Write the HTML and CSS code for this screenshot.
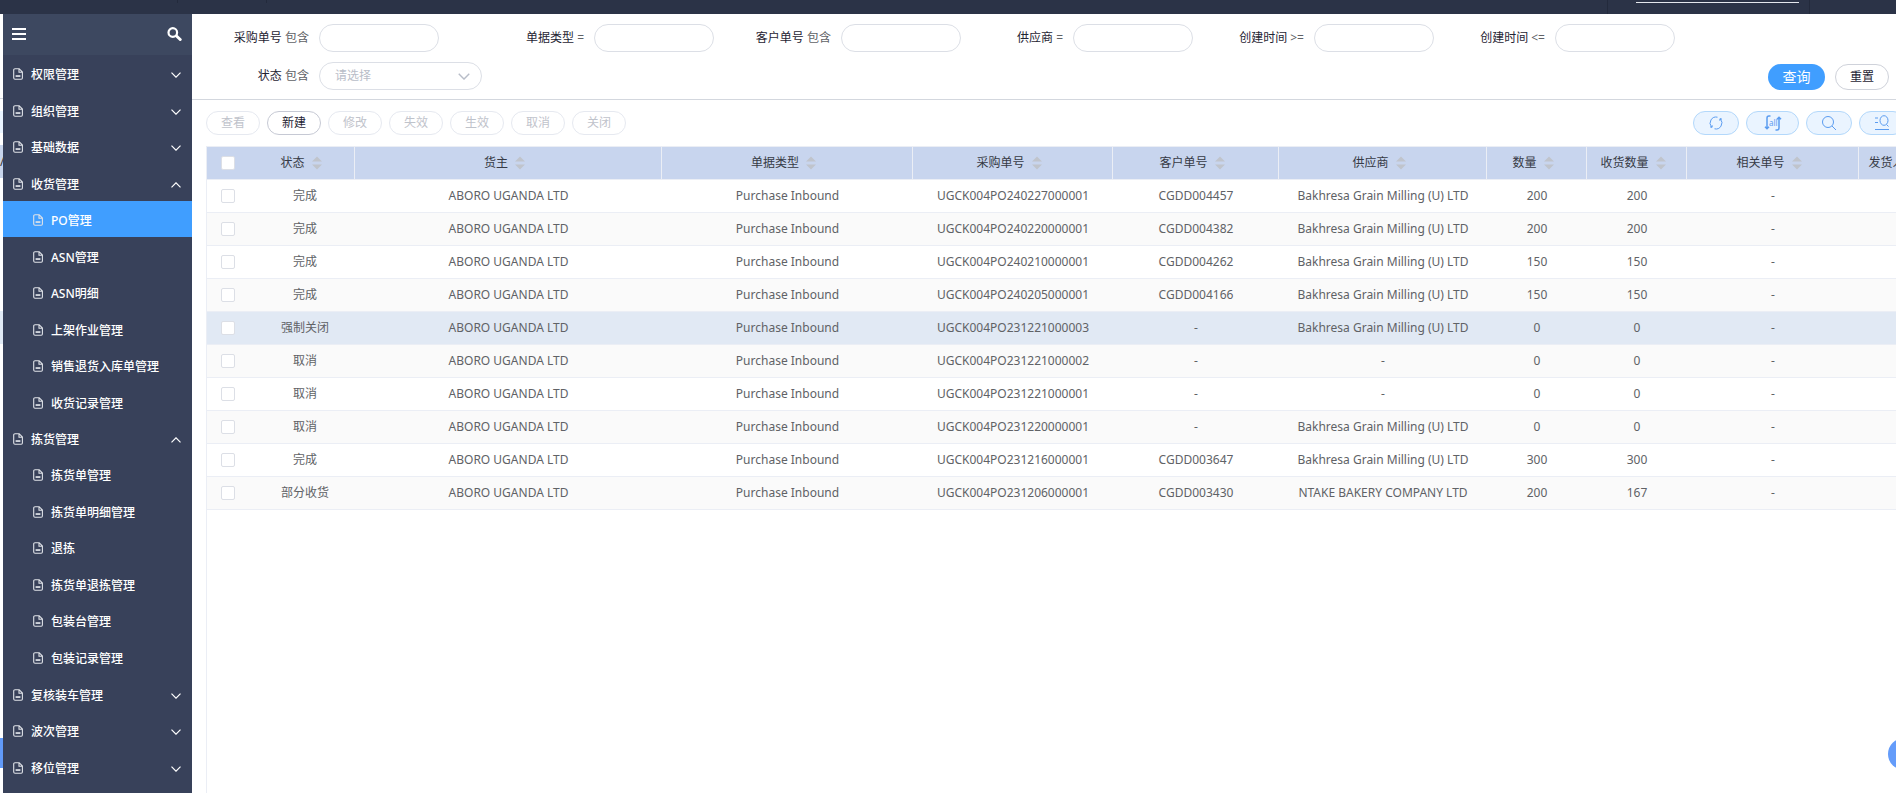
FILE: index.html
```html
<!DOCTYPE html>
<html lang="zh-CN">
<head>
<meta charset="utf-8">
<title>PO管理</title>
<link rel="stylesheet" href="styles.css">
</head>
<body>
<svg class="sprite" aria-hidden="true">
  <symbol id="doc" viewBox="0 0 10 12"><path d="M2 .7h4.200L9.400 4v6a1.200 1.200 0 0 1-1.200 1.200H2A1.300 1.300 0 0 1 .7 10V2A1.300 1.300 0 0 1 2 .7zM6 .9v3.400h3.200" fill="none" stroke="currentColor" stroke-width="1.100"/><path d="M2.600 7.200h4.800v1.700H2.600z" fill="currentColor"/></symbol>
  <symbol id="down" viewBox="0 0 10 6"><path d="M.5.7 5 5.200 9.500.7" fill="none" stroke="currentColor" stroke-width="1.200"/></symbol>
  <symbol id="up" viewBox="0 0 10 6"><path d="M.5 5.300 5 .8l4.500 4.500" fill="none" stroke="currentColor" stroke-width="1.200"/></symbol>
</svg>
<header class="topbar"><span class="tab"></span><span class="tab tab-side"></span><span class="tab tab-search"></span></header>
<div class="layout">
  <div class="edge" aria-hidden="true"><span class="edge-mark">/</span></div>
  <aside class="sidebar">
    <div class="side-head">
      <button class="icon-btn" type="button" aria-label="菜单"><svg width="14" height="12" viewBox="0 0 14 12"><path d="M0 1h14M0 6h14M0 11h14" stroke="#fff" stroke-width="2"/></svg></button>
      <button class="icon-btn" type="button" aria-label="搜索"><svg width="15" height="14" viewBox="0 0 15 14"><circle cx="5.800" cy="5.500" r="4.300" fill="none" stroke="#fff" stroke-width="2.200"/><path d="m9.500 9 3.700 3.500" stroke="#fff" stroke-width="3" stroke-linecap="round"/></svg></button>
    </div>
    <nav><ul class="menu" id="menu"></ul></nav>
  </aside>
  <main class="main">
    <form class="filters">
      <div class="field"><label for="f1"><b>采购单号</b> 包含</label><input id="f1" type="text"></div>
      <div class="field"><label for="f2"><b>单据类型</b> =</label><input id="f2" type="text"></div>
      <div class="field"><label for="f3"><b>客户单号</b> 包含</label><input id="f3" type="text"></div>
      <div class="field"><label for="f4"><b>供应商</b> =</label><input id="f4" type="text"></div>
      <div class="field"><label for="f5"><b>创建时间</b> &gt;=</label><input id="f5" type="text"></div>
      <div class="field"><label for="f6"><b>创建时间</b> &lt;=</label><input id="f6" type="text"></div>
      <div class="field field-select"><label for="f7"><b>状态</b> 包含</label><span class="select"><select id="f7"><option>请选择</option></select><svg class="select-arrow" width="12" height="7"><use href="#down"/></svg></span></div>
      <div class="actions"><button class="btn btn-primary" type="button">查询</button><button class="btn btn-plain" type="button">重置</button></div>
    </form>
    <section class="workspace">
      <div class="toolbar">
        <button class="btn" type="button" disabled>查看</button>
        <button class="btn btn-active" type="button">新建</button>
        <button class="btn" type="button" disabled>修改</button>
        <button class="btn" type="button" disabled>失效</button>
        <button class="btn" type="button" disabled>生效</button>
        <button class="btn" type="button" disabled>取消</button>
        <button class="btn" type="button" disabled>关闭</button>
        <span class="tools">
          <button class="tool" type="button" aria-label="刷新"><svg width="14" height="14" viewBox="0 0 14 14"><path d="M8.500 1.200A6 6 0 0 0 2.600 11M1 10.800l2 .6.300-2M5.500 12.800A6 6 0 0 0 11.400 3M13 3.200l-2-.6-.3 2"/></svg></button>
          <button class="tool tool-wide" type="button" aria-label="刷新全部"><svg width="18" height="16" viewBox="0 0 18 16"><path class="thick" d="M6.500 1H5Q3 1 3 3v10.500M1 11.800l2 2 2-2M11.500 15H13q2 0 2-2V2.500M13 4.200l2-2 2 2"/><text x="5" y="11">all</text></svg></button>
          <button class="tool" type="button" aria-label="查找"><svg width="16" height="16" viewBox="0 0 16 16"><circle cx="7" cy="7" r="5.500"/><path d="m11 11 4 4"/></svg></button>
          <button class="tool" type="button" aria-label="高级查询"><svg width="16" height="16" viewBox="0 0 16 16"><path d="M1 3h3M1 7.500h3M1 14.500h14M12.500 9.500l2 2"/><ellipse cx="10" cy="5.500" rx="4" ry="4.800"/></svg></button>
        </span>
      </div>
      <div class="table-box">
        <table>
          <colgroup><col class="c-check"><col class="c-100"><col><col class="c-type"><col class="c-po"><col class="c-cust"><col class="c-supp"><col class="c-100"><col class="c-100"><col class="c-rel"><col class="c-last"></colgroup>
          <thead><tr id="head"></tr></thead>
          <tbody id="rows"></tbody>
        </table>
      </div>
    </section>
  </main>
</div>
<button class="bubble" type="button" aria-label="客服"></button>
<script src="app.js"></script>
</body>
</html>
```
FILE: styles.css
```css
* { box-sizing: border-box; }
body {
  margin: 0;
  height: 100vh;
  display: flex;
  flex-direction: column;
  overflow: hidden;
  background: #fff;
  color: #606266;
  font: 12px/16px "Noto Sans", "Noto Sans CJK SC", sans-serif;
}
button, input, select { font: inherit; }
button { padding: 0; cursor: pointer; }
.sprite { position: absolute; width: 0; height: 0; }

.topbar { height: 14px; flex: none; display: flex; background: #2b3347; padding-right: 86px; }
.tab { width: 178px; height: 3px; border-right: 1px solid #232a3c; }
.tab-side { width: 89px; }
.tab-search { width: 203px; height: 14px; margin-left: auto; border: 1px solid #232a3c; border-width: 0 1px; padding: 2px 10px 0 28px; }
.tab-search::before { content: ""; display: block; height: 1px; background: #e4e7ed; }

.layout { flex: 1; min-height: 0; display: flex; }
.edge {
  flex: none;
  width: 3px;
  overflow: hidden;
  padding-top: 140px;
  background:
    linear-gradient(#d3d7de, #d3d7de) 0 84px / 3px 1px no-repeat,
    linear-gradient(#eaf4ff, #eaf4ff) 0 97px / 3px 22px no-repeat,
    linear-gradient(#c8d5ec, #c8d5ec) 0 131px / 3px 33px no-repeat,
    linear-gradient(#e1eaf5, #e1eaf5) 0 297px / 3px 33px no-repeat,
    linear-gradient(#619af9, #619af9) 0 724px / 3px 30px no-repeat,
    #fff;
}
.edge-mark { color: #333; }

.sidebar { flex: none; width: 189px; background: #38415a; color: #fff; overflow: hidden; }
.side-head { height: 41px; padding: 0 10px 2px 9px; display: flex; justify-content: space-between; align-items: center; background: #3d4860; }
.icon-btn { display: flex; border: 0; background: none; }
.menu, .submenu { list-style: none; margin: 0; padding: 0; }
.menu li:nth-child(odd) { margin-bottom: 1px; }
.menu a { display: flex; align-items: center; height: 36px; padding: 3px 11px 0 10px; color: #fff; text-decoration: none; font-weight: 500; }
.menu .doc { width: 10px; height: 12px; margin: 0 8px 2px 0; color: #dfe2e8; }
.menu .arrow { width: 10px; height: 6px; margin-left: auto; }
.menu .submenu a { padding-left: 30px; }
.menu .current { background: #409eff; }

.main { flex: 1; min-width: 0; display: flex; flex-direction: column; overflow: hidden; }
.filters {
  display: grid;
  grid-template-columns: 247fr 275fr 247fr 232fr 241fr 241fr 221fr;
  row-gap: 10px;
  padding: 10px 0 9px;
  border-bottom: 1px solid #d3d7de;
}
.field { display: flex; align-items: center; height: 28px; }
.field label { flex: 1; text-align: right; padding-right: 10px; white-space: nowrap; }
.field b { font-weight: 400; color: #1f2433; }
.field input, .field select { height: 28px; border: 1px solid #dcdfe6; border-radius: 14px; background: #fff; outline: 0; padding: 0 15px; }
.field input { width: 120px; }
.field-select { grid-column: 1 / 3; width: 290px; }
.select { position: relative; display: flex; }
.field select { width: 163px; appearance: none; color: #b8bdc8; }
.select-arrow { position: absolute; right: 12px; top: 11px; color: #b8bdc8; pointer-events: none; }
.actions { grid-column: 3 / 8; display: flex; justify-content: flex-end; align-items: center; gap: 10px; padding: 2px 7px 0 0; }

.btn { width: 54px; height: 24px; border: 1px solid #e6e9f0; border-radius: 12px; background: #fff; color: #bfc3cb; }
.btn-active { border-color: #c6c9d4; color: #1f2433; }
.btn-plain { height: 26px; border-radius: 13px; border-color: #cfd2da; color: #1f2433; }
.btn-primary { width: 57px; height: 26px; border: 0; border-radius: 13px; background: #409eff; color: #fff; font-size: 14px; }

.workspace { flex: 1; display: flex; flex-direction: column; width: calc(100% + 43px); padding: 11px 0 0 14px; }
.toolbar { display: flex; gap: 7px; padding-right: 34px; margin-bottom: 11px; }
.tools { margin-left: auto; display: flex; gap: 7px; }
.tool { display: flex; align-items: center; justify-content: center; width: 46px; height: 24px; border: 1px solid #b3d8fb; border-radius: 12px; background: #eaf4ff; }
.tool-wide { width: 53px; }
.tool svg { fill: none; stroke: #5b9cf0; stroke-width: 1; }
.tool .thick { stroke-width: 1.5; }
.tool text { fill: #5b9cf0; stroke: none; font-size: 8px; }

.table-box { flex: 1; border: 1px solid #ebeef5; border-width: 1px 0 0 1px; }
table { width: 100%; table-layout: fixed; border-collapse: separate; border-spacing: 0; }
.c-check { width: 48px; }
.c-100 { width: 100px; }
.c-type { width: 251px; }
.c-po { width: 200px; }
.c-cust { width: 166px; }
.c-supp { width: 208px; }
.c-rel { width: 172px; }
.c-last { width: 80px; }
th, td { height: 33px; padding: 0; text-align: center; white-space: nowrap; border-bottom: 1px solid #ebeef5; }
th { background: #c8d5ee; color: #363a45; font-weight: 400; border-right: 1px solid #ebeef5; }
th:first-child { border-right: 0; }
th:first-child, td:first-child { text-align: left; padding-left: 14px; }
tbody tr:nth-child(even) { background: #fafafa; }
tbody .selected { background: #e1e9f4; }
.check { appearance: none; display: block; width: 14px; height: 14px; margin: 0; border: 1px solid #dcdfe6; border-radius: 2px; background: #fff; }
.th { display: flex; align-items: center; justify-content: center; }
.sort { width: 24px; height: 14px; fill: #c0c4cc; }

.bubble { position: fixed; right: -24px; bottom: 23px; width: 32px; height: 32px; border: 0; border-radius: 50%; background: #649cfa; }
```
FILE: app.js
```js
const menu = [
  ["权限管理"], ["组织管理"], ["基础数据"],
  ["收货管理", ["PO管理", "ASN管理", "ASN明细", "上架作业管理", "销售退货入库单管理", "收货记录管理"]],
  ["拣货管理", ["拣货单管理", "拣货单明细管理", "退拣", "拣货单退拣管理", "包装台管理", "包装记录管理"]],
  ["复核装车管理"], ["波次管理"], ["移位管理"]
];
const doc = '<svg class="doc"><use href="#doc"/></svg>';
document.getElementById("menu").innerHTML = menu.map(([name, subs]) =>
  `<li><a href="#">${doc}${name}<svg class="arrow"><use href="#${subs ? "up" : "down"}"/></svg></a>` +
  (subs ? `<ul class="submenu">${subs.map(s =>
    `<li><a href="#"${s === "PO管理" ? ' class="current"' : ""}>${doc}${s}</a></li>`).join("")}</ul>` : "") +
  "</li>").join("");

const check = label => `<input class="check" type="checkbox" aria-label="${label}">`;
const heads = ["状态", "货主", "单据类型", "采购单号", "客户单号", "供应商", "数量", "收货数量", "相关单号", "发货人"];
document.getElementById("head").innerHTML = `<th>${check("全选")}</th>` + heads.map(h =>
  `<th><span class="th">${h}<svg class="sort" viewBox="0 0 24 14"><path d="M7 5.500h10l-5-5zM7 8.500h10l-5 5z"/></svg></span></th>`).join("");

const grain = "Bakhresa Grain Milling (U) LTD";
const rows = [
  ["完成", "240227000001", "CGDD004457", grain, 200, 200],
  ["完成", "240220000001", "CGDD004382", grain, 200, 200],
  ["完成", "240210000001", "CGDD004262", grain, 150, 150],
  ["完成", "240205000001", "CGDD004166", grain, 150, 150],
  ["强制关闭", "231221000003", "-", grain, 0, 0],
  ["取消", "231221000002", "-", "-", 0, 0],
  ["取消", "231221000001", "-", "-", 0, 0],
  ["取消", "231220000001", "-", grain, 0, 0],
  ["完成", "231216000001", "CGDD003647", grain, 300, 300],
  ["部分收货", "231206000001", "CGDD003430", "NTAKE BAKERY COMPANY LTD", 200, 167]
];
document.getElementById("rows").innerHTML = rows.map(([st, po, cust, supp, qty, got], i) => {
  const cells = [st, "ABORO UGANDA LTD", "Purchase Inbound", "UGCK004PO" + po, cust, supp, qty, got, "-", ""];
  return `<tr${i === 4 ? ' class="selected"' : ""}><td>${check(po)}</td>` +
    cells.map(c => `<td>${c}</td>`).join("") + "</tr>";
}).join("");
```
